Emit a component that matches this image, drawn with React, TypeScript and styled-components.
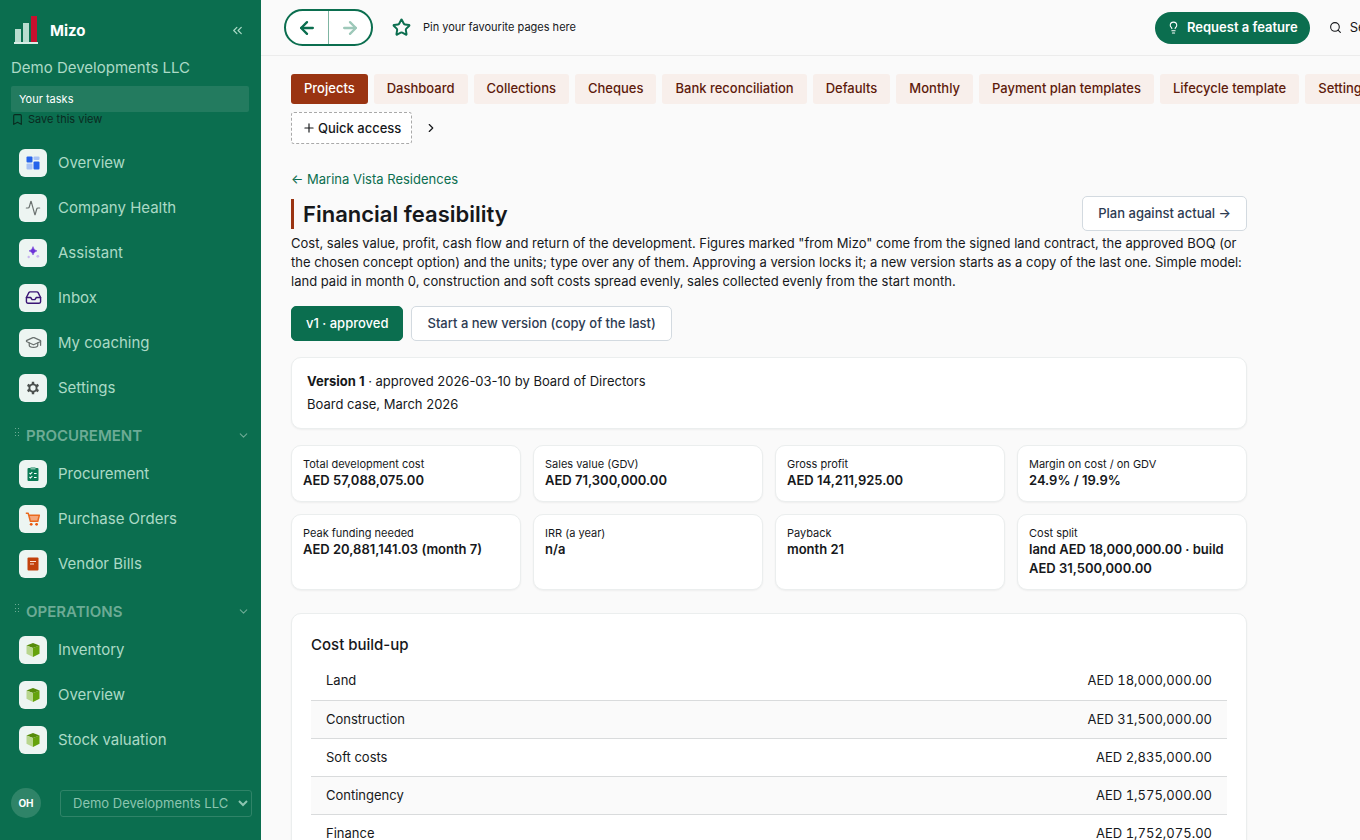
import React from "react";
import styled, { createGlobalStyle } from "styled-components";
import {
  Activity,
  ArrowLeft,
  ArrowRight,
  Bookmark,
  ChevronDown,
  ChevronRight,
  ChevronsLeft,
  GraduationCap,
  Inbox,
  Lightbulb,
  Plus,
  Search,
  Star,
} from "lucide-react";

const green = "#0b6e4f";
const rust = "#9a3412";
const ink = "#16181b";
const mint = "#abdac6";

const GlobalStyle = createGlobalStyle`
  *, *::before, *::after { box-sizing: border-box; }
  body {
    margin: 0;
    background: #fafafa;
    color: ${ink};
    font-family: Inter, "Liberation Sans", sans-serif;
    font-size: 14px;
    line-height: 19px;
  }
  button, select { font: inherit; color: inherit; margin: 0; }
  button { cursor: pointer; }
  a { color: inherit; text-decoration: none; }
  h1, h2, p, ul, dl, dd { margin: 0; padding: 0; }
  svg { display: block; flex: none; }
`;

const Shell = styled.div`
  display: flex;
  height: 100vh;
  overflow: hidden;
`;

/* ---------- sidebar ---------- */

const Sidebar = styled.aside`
  display: flex;
  flex-direction: column;
  flex: none;
  width: 261px;
  background: ${green};
  color: ${mint};
`;

const Brand = styled.div`
  display: flex;
  align-items: center;
  gap: 12px;
  padding: 15px 16px 0 14px;
`;

const BrandName = styled.span`
  flex: 1;
  color: #fff;
  font-size: 15px;
  font-weight: 700;
`;

const CollapseButton = styled.button`
  padding: 0;
  border: 0;
  background: none;
`;

const Company = styled.p`
  padding: 13px 11px 8px;
  font-size: 15px;
  line-height: 20px;
`;

const TasksLink = styled.a`
  margin: 0 12px 0 11px;
  padding: 4px 8px;
  border-radius: 2px;
  background: #237b5f;
  color: #fff;
  font-size: 11px;
  line-height: 18px;
`;

const SaveView = styled.button`
  display: flex;
  align-items: center;
  gap: 4px;
  padding: 0 11px;
  border: 0;
  background: none;
  color: #0a2a1f;
  font-size: 11px;
  line-height: 15px;
`;

const Nav = styled.nav`
  flex: 1;
  min-height: 0;
  overflow: hidden;
  padding-top: 13px;
`;

const NavList = styled.ul`
  list-style: none;
`;

const NavLink = styled.a`
  display: flex;
  align-items: center;
  gap: 11px;
  height: 45px;
  padding: 0 19px;
  font-size: 15px;
`;

const IconTile = styled.span`
  display: grid;
  place-items: center;
  width: 28px;
  height: 28px;
  border-radius: 6px;
  background: #edf5f2;
`;

const SectionToggle = styled.button`
  display: flex;
  align-items: center;
  gap: 6px;
  width: 100%;
  height: 41px;
  padding: 10px 11px 0 14px;
  border: 0;
  background: none;
  color: #6dab95;
  font-size: 15px;
  font-weight: 600;
  text-align: left;
`;

const SectionName = styled.span`
  flex: 1;
`;

const SidebarFooter = styled.div`
  display: flex;
  align-items: center;
  gap: 19px;
  padding: 0 9px 22px 11px;
`;

const Avatar = styled.span`
  display: grid;
  place-items: center;
  flex: none;
  width: 30px;
  height: 30px;
  border-radius: 50%;
  background: #2f8468;
  color: #fff;
  font-size: 10px;
  font-weight: 700;
`;

const CompanySelect = styled.select`
  flex: 1;
  min-width: 0;
  height: 27px;
  padding: 0 0 0 8px;
  border: 1px solid #2f8468;
  border-radius: 3px;
  background: ${green};
  color: #8cc5b0;
  font-size: 13px;
`;

/* ---------- top bar ---------- */

const Main = styled.main`
  flex: 1;
  min-width: 0;
  overflow: hidden;
`;

const TopBar = styled.header`
  display: flex;
  align-items: center;
  gap: 19px;
  height: 56px;
  padding-left: 23px;
  border-bottom: 1px solid #ececec;
  overflow: hidden;
`;

const HistoryPill = styled.div`
  display: flex;
  flex: none;
  width: 89px;
  height: 37px;
  border: 2px solid ${green};
  border-radius: 19px;
  background: #fff;
  overflow: hidden;
`;

const HistoryButton = styled.button`
  display: grid;
  place-items: center;
  flex: 1;
  padding: 0;
  border: 0;
  background: none;
  color: ${green};

  &:disabled { color: #9dc8b9; cursor: default; }
  & + & { border-left: 1px solid #7fb5a2; }
`;

const Pins = styled.div`
  display: flex;
  align-items: center;
  flex: 1 0 744px;
  gap: 12px;
  font-size: 11px;
  color: ${ink};

  svg { color: ${green}; }
`;

const RequestButton = styled.button`
  display: flex;
  align-items: center;
  flex: none;
  gap: 7px;
  height: 32px;
  padding: 0 12px;
  border: 0;
  border-radius: 16px;
  background: ${green};
  color: #fff;
  font-size: 13px;
  font-weight: 600;
`;

const SearchButton = styled.button`
  display: flex;
  align-items: center;
  flex: none;
  gap: 8px;
  padding: 0;
  border: 0;
  background: none;
  font-size: 13px;
`;

/* ---------- module tabs ---------- */

const Content = styled.div`
  padding: 18px 0 0 30px;
`;

const Tabs = styled.nav`
  display: flex;
  gap: 6px;
  overflow: hidden;
`;

const Tab = styled.a<{ $active?: boolean }>`
  flex: none;
  padding: 5px 13px 6px;
  border-radius: 3px;
  background: ${(p) => (p.$active ? rust : "#f8efeb")};
  color: ${(p) => (p.$active ? "#fff" : "#5e1b0b")};
  font-size: 13px;
  font-weight: 500;
`;

const QuickRow = styled.div`
  display: flex;
  align-items: center;
  gap: 12px;
  padding: 8px 0 25px;
`;

const QuickButton = styled.button`
  display: flex;
  align-items: center;
  gap: 2px;
  height: 32px;
  padding: 0 10px;
  border: 1px dashed #a9a9a9;
  border-radius: 3px;
  background: #fff;
  font-weight: 500;
  font-size: 13px;
`;

const MoreButton = styled.button`
  padding: 0;
  border: 0;
  background: none;
`;

/* ---------- page ---------- */

const Page = styled.div`
  max-width: 956px;
`;

const BackLink = styled.a`
  display: inline-block;
  color: ${green};
  font-size: 13px;
`;

const TitleRow = styled.div`
  display: flex;
  align-items: center;
  justify-content: space-between;
  padding-top: 7px;
`;

const Title = styled.h1`
  padding-left: 9px;
  border-left: 3px solid ${rust};
  font-size: 22px;
  font-weight: 600;
  line-height: 30px;
`;

const Button = styled.button<{ $primary?: boolean }>`
  height: 35px;
  padding: 0 ${(p) => (p.$primary ? 14 : 15)}px;
  border: 1px solid ${(p) => (p.$primary ? green : "#d3dae0")};
  border-radius: 5px;
  background: ${(p) => (p.$primary ? green : "#fff")};
  color: ${(p) => (p.$primary ? "#fff" : "#2d3b52")};
  font-size: 13px;
  font-weight: 500;
`;

const Intro = styled.p`
  padding-top: 3px;
  font-size: 13px;
`;

const Versions = styled.div`
  display: flex;
  gap: 8px;
  padding: 15px 0 16px;
`;

const Card = styled.section`
  border: 1px solid #ebeeee;
  border-radius: 10px;
  background: #fff;
  box-shadow: 0 1px 2px rgba(0, 0, 0, 0.05);
`;

const VersionCard = styled(Card)`
  padding: 12px 15px;
  font-size: 13px;
  line-height: 23px;
`;

const Stats = styled.dl`
  display: grid;
  grid-template-columns: repeat(4, 1fr);
  gap: 12px;
  padding: 16px 0 23px;
`;

const Stat = styled(Card).attrs({ as: "div" })`
  padding: 11px;
`;

const StatLabel = styled.dt`
  font-size: 11px;
  line-height: 14px;
`;

const StatValue = styled.dd`
  font-size: 13px;
  font-weight: 600;
`;

const CostCard = styled(Card)`
  padding: 19px;
`;

const CardTitle = styled.h2`
  padding: 2px 0 8px;
  font-size: 15px;
  font-weight: 500;
`;

const CostTable = styled.table`
  width: 100%;
  border-collapse: collapse;
  font-size: 13px;

  tr { border-bottom: 1px solid #d9dbdc; }
  tr:nth-child(even) { background: #fafafa; }
  th, td { height: 38px; padding: 0 15px; font-weight: 400; }
  th { text-align: left; }
  td { text-align: right; font-variant-numeric: tabular-nums; }
`;

/* ---------- drawings ---------- */

const LogoMark = () => (
  <svg width="24" height="30" viewBox="0 0 24 30" aria-hidden="true">
    <path d="M1 14h6v13H1zM9 8h6v19H9z" fill="#b9dccf" />
    <path d="M17 1h6v26h-6z" fill="#c8102e" />
    <path d="M0 27h24v2H0z" fill="#d9ece5" />
  </svg>
);

const GridIcon = () => (
  <svg width="14" height="14" viewBox="0 0 14 14" aria-hidden="true">
    <rect x="0.5" y="0.5" width="6" height="6" rx="1" fill="#2563eb" />
    <rect x="7.5" y="0.5" width="6" height="3.5" rx="1" fill="#a8c2f5" />
    <rect x="0.5" y="7.5" width="6" height="6" rx="1" fill="#a8c2f5" />
    <rect x="7.5" y="5.5" width="6" height="8" rx="1" fill="#2563eb" />
  </svg>
);

const SparkIcon = () => (
  <svg width="14" height="14" viewBox="0 0 14 14" aria-hidden="true">
    <path d="M7 0.6Q7.6 4.2 11 4.9Q7.6 5.6 7 9Q6.4 5.6 3 4.9Q6.4 4.2 7 .6z" fill="#6d35d8" stroke="#6d35d8" strokeWidth="0.5" />
    <circle cx="2.7" cy="11" r="1.2" fill="#c9b6ef" />
    <circle cx="11.8" cy="10.3" r="1.4" fill="#c9b6ef" />
  </svg>
);

const GearIcon = () => (
  <svg width="14" height="14" viewBox="0 0 14 14" aria-hidden="true">
    <circle cx="7" cy="7" r="3.6" fill="none" stroke="#4a4f4d" strokeWidth="1.9" />
    <path
      d="M7 .8v2.400M7 10.800v2.400M1.600 3.900l2.100 1.200M10.300 8.900l2.100 1.200M1.600 10.100l2.100-1.200M10.300 5.100l2.100-1.200"
      stroke="#4a4f4d"
      strokeWidth="2.4"
    />
  </svg>
);

const ClipboardIcon = () => (
  <svg width="14" height="16" viewBox="0 0 14 16" aria-hidden="true">
    <rect x="1.500" y="2" width="11" height="13" rx="1" fill="#0b7a55" />
    <rect x="4.500" y="1" width="5" height="2.500" rx="0.500" fill="#7dbda5" />
    <path d="M3.500 7l1 1 1.800-2M3.500 11l1 1 1.800-2M8 7.500h2.600M8 11.500h2.600" fill="none" stroke="#fff" strokeWidth="1.100" />
  </svg>
);

const CartIcon = () => (
  <svg width="16" height="16" viewBox="0 0 16 16" aria-hidden="true">
    <path d="M4 4.500h10l-1.300 5.500H5.500z" fill="#f5a77c" />
    <path d="M.8 2.300h2.400l2.200 8h7.400l1.500-6H3.800" fill="none" stroke="#ea6a1f" strokeWidth="1.500" strokeLinejoin="round" />
    <circle cx="6.200" cy="13.300" r="1.400" fill="#ea580c" />
    <circle cx="11.600" cy="13.300" r="1.400" fill="#ea580c" />
  </svg>
);

const BillIcon = () => (
  <svg width="14" height="16" viewBox="0 0 14 16" aria-hidden="true">
    <rect x="1.500" y="1.500" width="11" height="13" rx="1" fill="#c2410c" />
    <path d="M4 5.500h6M4 8h4" stroke="#fbe3d8" strokeWidth="1.200" />
  </svg>
);

const BoxIcon = () => (
  <svg width="14" height="16" viewBox="0 0 14 16" aria-hidden="true">
    <path d="M7 6l6.500-2.400v8.200L7 15z" fill="#65a30d" />
    <path d="M.5 3.600L7 1l6.500 2.600L7 6z" fill="#568b0a" />
    <path d="M.5 3.600L7 6v9L.5 11.800z" fill="#b8d68e" />
  </svg>
);

const GripIcon = () => (
  <svg width="6" height="16" viewBox="0 0 6 16" fill="#6dab95" aria-hidden="true">
    <path d="M1 0h1v1H1zM4 0h1v1H4zM1 4h1v1H1zM4 4h1v1H4zM1 7h1v1H1zM4 7h1v1H4z" />
  </svg>
);

/* ---------- data ---------- */

type NavItem = { label: string; icon: React.ReactNode };

const primaryNav: NavItem[] = [
  { label: "Overview", icon: <GridIcon /> },
  { label: "Company Health", icon: <Activity size={16} strokeWidth={1.8} color="#6b7270" /> },
  { label: "Assistant", icon: <SparkIcon /> },
  { label: "Inbox", icon: <Inbox size={17} color="#3b1676" /> },
  { label: "My coaching", icon: <GraduationCap size={17} strokeWidth={1.8} color="#6b7270" /> },
  { label: "Settings", icon: <GearIcon /> },
];

const sections: { name: string; items: NavItem[] }[] = [
  {
    name: "PROCUREMENT",
    items: [
      { label: "Procurement", icon: <ClipboardIcon /> },
      { label: "Purchase Orders", icon: <CartIcon /> },
      { label: "Vendor Bills", icon: <BillIcon /> },
    ],
  },
  {
    name: "OPERATIONS",
    items: [
      { label: "Inventory", icon: <BoxIcon /> },
      { label: "Overview", icon: <BoxIcon /> },
      { label: "Stock valuation", icon: <BoxIcon /> },
    ],
  },
];

const tabs = [
  "Projects",
  "Dashboard",
  "Collections",
  "Cheques",
  "Bank reconciliation",
  "Defaults",
  "Monthly",
  "Payment plan templates",
  "Lifecycle template",
  "Settings",
];

const stats = [
  ["Total development cost", "AED 57,088,075.00"],
  ["Sales value (GDV)", "AED 71,300,000.00"],
  ["Gross profit", "AED 14,211,925.00"],
  ["Margin on cost / on GDV", "24.9% / 19.9%"],
  ["Peak funding needed", "AED 20,881,141.03 (month 7)"],
  ["IRR (a year)", "n/a"],
  ["Payback", "month 21"],
  ["Cost split", "land AED 18,000,000.00 · build AED 31,500,000.00"],
];

const costs = [
  ["Land", "AED 18,000,000.00"],
  ["Construction", "AED 31,500,000.00"],
  ["Soft costs", "AED 2,835,000.00"],
  ["Contingency", "AED 1,575,000.00"],
  ["Finance", "AED 1,752,075.00"],
];

const NavItems = ({ items }: { items: NavItem[] }) => (
  <NavList>
    {items.map((item) => (
      <li key={item.label}>
        <NavLink href="#">
          <IconTile>{item.icon}</IconTile>
          {item.label}
        </NavLink>
      </li>
    ))}
  </NavList>
);

export default function App() {
  return (
    <Shell>
      <GlobalStyle />
      <Sidebar>
        <Brand>
          <LogoMark />
          <BrandName>Mizo</BrandName>
          <CollapseButton aria-label="Collapse sidebar">
            <ChevronsLeft size={15} />
          </CollapseButton>
        </Brand>
        <Company>Demo Developments LLC</Company>
        <TasksLink href="#">Your tasks</TasksLink>
        <SaveView>
          <Bookmark size={13} />
          Save this view
        </SaveView>
        <Nav aria-label="Main">
          <NavItems items={primaryNav} />
          {sections.map((section) => (
            <React.Fragment key={section.name}>
              <SectionToggle aria-expanded="true">
                <GripIcon />
                <SectionName>{section.name}</SectionName>
                <ChevronDown size={13} />
              </SectionToggle>
              <NavItems items={section.items} />
            </React.Fragment>
          ))}
        </Nav>
        <SidebarFooter>
          <Avatar>OH</Avatar>
          <CompanySelect aria-label="Company">
            <option>Demo Developments LLC</option>
          </CompanySelect>
        </SidebarFooter>
      </Sidebar>

      <Main>
        <TopBar>
          <HistoryPill>
            <HistoryButton aria-label="Back">
              <ArrowLeft size={20} strokeWidth={2.8} />
            </HistoryButton>
            <HistoryButton aria-label="Forward" disabled>
              <ArrowRight size={20} strokeWidth={2.8} />
            </HistoryButton>
          </HistoryPill>
          <Pins>
            <Star size={19} strokeWidth={2.5} />
            Pin your favourite pages here
          </Pins>
          <RequestButton>
            <Lightbulb size={13} />
            Request a feature
          </RequestButton>
          <SearchButton>
            <Search size={13} />
            Search
          </SearchButton>
        </TopBar>

        <Content>
          <Tabs aria-label="Module">
            {tabs.map((tab, i) => (
              <Tab key={tab} href="#" $active={i === 0}>
                {tab}
              </Tab>
            ))}
          </Tabs>
          <QuickRow>
            <QuickButton>
              <Plus size={14} />
              Quick access
            </QuickButton>
            <MoreButton aria-label="More">
              <ChevronRight size={14} />
            </MoreButton>
          </QuickRow>

          <Page>
            <BackLink href="#">← Marina Vista Residences</BackLink>
            <TitleRow>
              <Title>Financial feasibility</Title>
              <Button>Plan against actual →</Button>
            </TitleRow>
            <Intro>
              Cost, sales value, profit, cash flow and return of the development. Figures marked "from Mizo" come from
              the signed land contract, the approved BOQ (or the chosen concept option) and the units; type over any of
              them. Approving a version locks it; a new version starts as a copy of the last one. Simple model: land paid
              in month 0, construction and soft costs spread evenly, sales collected evenly from the start month.
            </Intro>
            <Versions>
              <Button $primary>v1 · approved</Button>
              <Button>Start a new version (copy of the last)</Button>
            </Versions>
            <VersionCard>
              <p>
                <strong>Version 1</strong> · approved 2026-03-10 by Board of Directors
              </p>
              <p>Board case, March 2026</p>
            </VersionCard>
            <Stats>
              {stats.map(([label, value]) => (
                <Stat key={label}>
                  <StatLabel>{label}</StatLabel>
                  <StatValue>{value}</StatValue>
                </Stat>
              ))}
            </Stats>
            <CostCard>
              <CardTitle>Cost build-up</CardTitle>
              <CostTable>
                <tbody>
                  {costs.map(([name, amount]) => (
                    <tr key={name}>
                      <th scope="row">{name}</th>
                      <td>{amount}</td>
                    </tr>
                  ))}
                </tbody>
              </CostTable>
            </CostCard>
          </Page>
        </Content>
      </Main>
    </Shell>
  );
}
